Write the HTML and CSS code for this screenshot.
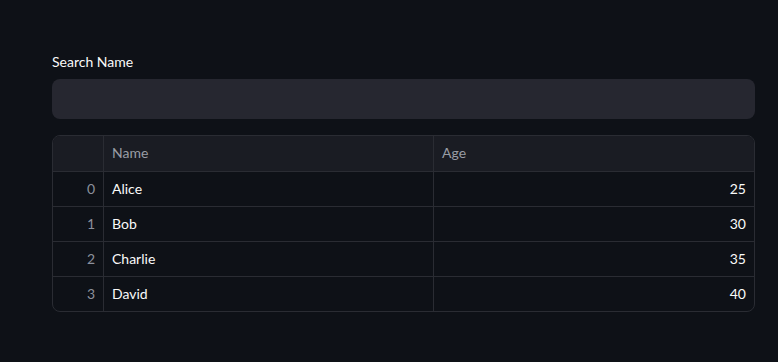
FILE: index.html
```html
<!DOCTYPE html>
<html lang="en">
<head>
    <meta charset="UTF-8">
    <meta name="viewport" content="width=device-width, initial-scale=1.0">
    <title>Search</title>
    <link rel="stylesheet" href="styles.css">
</head>
<body>

    <div class="main">
        <label class="field-label" for="search">Search Name</label>
        <input class="search-input" id="search" type="text">

        <div class="table-wrap">
            <table class="data-table">
                <thead>
                    <tr>
                        <th class="idx"></th>
                        <th class="col-name">Name</th>
                        <th class="col-age">Age</th>
                    </tr>
                </thead>
                <tbody>
                    <tr><td class="idx">0</td><td>Alice</td><td class="num">25</td></tr>
                    <tr><td class="idx">1</td><td>Bob</td><td class="num">30</td></tr>
                    <tr><td class="idx">2</td><td>Charlie</td><td class="num">35</td></tr>
                    <tr><td class="idx">3</td><td>David</td><td class="num">40</td></tr>
                </tbody>
            </table>
        </div>
    </div>

</body>
</html>
```

FILE: styles.css
```css
body {
    margin: 0;
    background-color: #0e1117;
    color: #fafafa;
    font-family: "Lato", "Noto Sans", sans-serif;
}
.main {
    padding: 51px 23px 0 52px;
}
.field-label {
    display: block;
    font-size: 14px;
    line-height: 22px;
    margin-bottom: 6px;
}
.search-input {
    display: block;
    box-sizing: border-box;
    width: 100%;
    height: 40px;
    margin: 0 0 16px 0;
    border: none;
    border-radius: 8px;
    background-color: #262730;
    color: #fafafa;
    outline: none;
}
.table-wrap {
    border: 1px solid #2a2c33;
    border-radius: 8px;
    overflow: hidden;
}
.data-table {
    width: 100%;
    border-collapse: separate;
    border-spacing: 0;
    table-layout: fixed;
    font-size: 14px;
}
.data-table th,
.data-table td {
    box-sizing: border-box;
    height: 35px;
    padding: 0 8px 2px 8px;
    border-right: 1px solid #2a2c33;
    border-bottom: 1px solid #2a2c33;
    text-align: left;
    font-weight: normal;
}
.data-table th:last-child,
.data-table td:last-child {
    border-right: none;
}
.data-table tbody tr:last-child td {
    border-bottom: none;
    height: 34px;
}
.data-table thead th {
    height: 36px;
    background-color: #1a1c23;
    color: #999ca5;
}
.data-table td {
    color: #fafafa;
}
.data-table .idx {
    width: 51px;
    text-align: right;
    color: #8c909c;
}
.data-table .col-name {
    width: 330px;
}
.data-table .num {
    text-align: right;
}
```
